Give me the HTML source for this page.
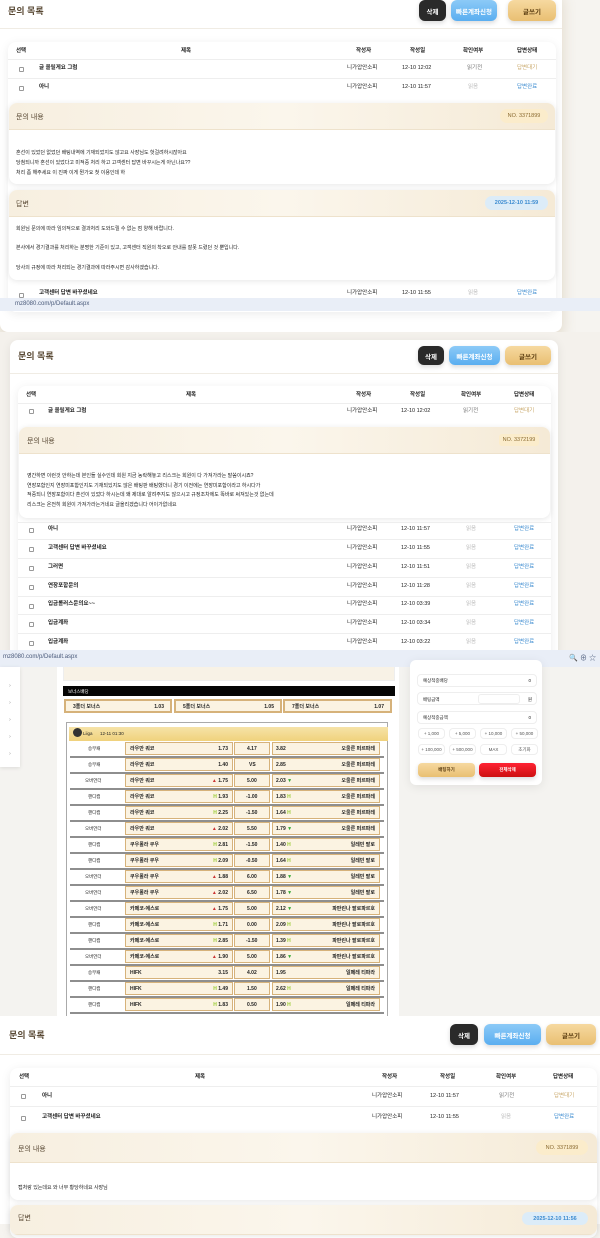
<!DOCTYPE html>
<html><head><meta charset="utf-8">
<style>
*{box-sizing:border-box;margin:0;padding:0}
body{width:600px;height:1224px;position:relative;overflow:hidden;background:#f6f4f0;font-family:"Liberation Sans","Noto Sans CJK KR",sans-serif;color:#222}
.a{position:absolute}
.card{position:absolute;background:#fff;border-radius:8px;box-shadow:0 2px 10px rgba(0,0,0,.08)}
.ttl{position:absolute;font-size:9px;color:#5a4a35;font-weight:bold;line-height:11px}
.btn{position:absolute;border-radius:6px;font-size:6.5px;font-weight:bold;display:flex;align-items:center;justify-content:center;box-shadow:0 2px 5px rgba(0,0,0,.15)}
.bk{background:#2a2a2a;color:#fff}.bl{background:linear-gradient(#8ccaf7,#5aaef0);color:#fff}.gd{background:linear-gradient(#f6d9a0,#e9bf72);color:#5a3c10}
.t{position:absolute;font-size:5.5px;white-space:nowrap;line-height:7px}
.b{font-weight:bold}
.cb{position:absolute;width:5px;height:5px;border:1px solid #999;border-radius:1px;background:#fff}
.pnl{position:absolute;background:#fff;border-radius:8px;box-shadow:0 1px 6px rgba(0,0,0,.1);overflow:hidden}
.ph{position:absolute;left:0;right:0;top:0;background:linear-gradient(90deg,#f7efe0,#fbf6ec,#f5ead6);border-bottom:1px solid #eee2cc}
.badge{position:absolute;border-radius:8px;font-size:5.5px;display:flex;align-items:center;justify-content:center}
.no{background:#fbeccb;color:#8a6a30}.dt{background:#dcecf8;color:#3a8ad0;font-weight:bold}
.line{position:absolute;height:1px;background:#eee}
.url{position:absolute;left:0;width:600px;background:#e9eef7;font-size:6px;color:#4a5a7a}
.bet{position:absolute;height:13px;background:#fbf3e2;border:1px solid #d6b27a;font-size:5px;font-weight:bold}
.bet span{position:absolute;top:3px;line-height:6px}
.sep{position:absolute;left:70px;width:314px;height:2px;background:#8e8e8e}
.ri{position:absolute;left:417px;width:120px;height:13px;border:1px solid #eee;border-radius:4px;font-size:4.5px;background:#fff}
.chip{position:absolute;width:27px;height:11px;border:1px solid #eee;border-radius:4px;font-size:4.5px;display:flex;align-items:center;justify-content:center;background:#fff;color:#555}
</style></head><body>

<!-- SECTION 1 -->
<div class="card" style="left:0;top:-10px;width:562px;height:342px;box-shadow:0 6px 14px rgba(160,130,80,.25)"></div>
<div class="ttl" style="left:8px;top:6px">문의 목록</div>
<div class="btn bk" style="left:419px;top:0;width:27px;height:21px">삭제</div>
<div class="btn bl" style="left:451px;top:0;width:46px;height:21px">빠른계좌신청</div>
<div class="btn gd" style="left:508px;top:0;width:48px;height:21px">글쓰기</div>
<div class="line" style="left:0;top:28px;width:562px;background:#f0ece4"></div>
<div class="card" style="left:8px;top:42px;width:548px;height:270px"></div>
<div class="t b" style="left:16px;top:48px">선택</div><div class="t b" style="left:181px;top:48px">제목</div>
<div class="t b" style="left:356px;top:48px">작성자</div><div class="t b" style="left:410px;top:48px">작성일</div>
<div class="t b" style="left:463px;top:48px">확인여부</div><div class="t b" style="left:517px;top:48px">답변상태</div>
<div class="line" style="left:8px;top:59px;width:548px"></div>
<div class="cb" style="left:19px;top:67px"></div><div class="t b" style="left:39px;top:65px">글 올릴게요 그럼</div>
<div class="t" style="left:347px;top:65px">니가압안소피</div><div class="t" style="left:402px;top:65px">12-10 12:02</div><div class="t" style="left:467px;top:65px;color:#777">읽기전</div><div class="t" style="left:517px;top:65px;color:#c9a86a">답변대기</div>
<div class="line" style="left:8px;top:78px;width:548px"></div>
<div class="cb" style="left:19px;top:86px"></div><div class="t b" style="left:39px;top:84px">아니</div>
<div class="t" style="left:347px;top:84px">니가압안소피</div><div class="t" style="left:402px;top:84px">12-10 11:57</div><div class="t" style="left:468px;top:84px;color:#bbb">읽음</div><div class="t" style="left:517px;top:84px;color:#3a8ad0">답변완료</div>
<div class="pnl" style="left:9px;top:103px;width:546px;height:81px"><div class="ph" style="height:27px"></div></div>
<div class="ttl" style="left:16px;top:112px;font-size:7px;font-weight:normal">문의 내용</div>
<div class="badge no" style="left:500px;top:109px;width:48px;height:14px">NO. 3371899</div>
<div class="t" style="left:16px;top:150px;font-size:5px">혼선이 있었던 없었던 배팅내역에 기재되었지도 않고요 사장님도 헛걸려하시잖아요</div>
<div class="t" style="left:16px;top:160px;font-size:5px">당첨되니까 혼선이 있었다고 미적중 처리 하고 고객센터 답변 바꾸시는게 아닌나요??</div>
<div class="t" style="left:16px;top:170px;font-size:5px">처리 좀 해주세요 이 진짜 이게 뭔가요 첫 이용인데 하</div>
<div class="pnl" style="left:9px;top:190px;width:546px;height:90px"><div class="ph" style="height:27px"></div></div>
<div class="ttl" style="left:16px;top:199px;font-size:7px;font-weight:normal">답변</div>
<div class="badge dt" style="left:485px;top:196px;width:63px;height:14px">2025-12-10 11:59</div>
<div class="t" style="left:16px;top:226px;font-size:5px">회원님 문의에 따라 임의적으로 결과처리 도와드릴 수 없는 점 양해 바랍니다.</div>
<div class="t" style="left:16px;top:245px;font-size:5px">본사에서 경기결과를 처리하는 분명한 기준이 있고, 고객센터 직원의 착오로 안내를 잘못 드렸던 것 뿐입니다.</div>
<div class="t" style="left:16px;top:265px;font-size:5px">당사의 규정에 따라 처리되는 경기결과에 따라주시면 감사하겠습니다.</div>
<div class="cb" style="left:19px;top:293px"></div><div class="t b" style="left:39px;top:290px">고객센터 답변 바꾸셨네요</div>
<div class="t" style="left:347px;top:290px">니가압안소피</div><div class="t" style="left:402px;top:290px">12-10 11:55</div><div class="t" style="left:468px;top:290px;color:#bbb">읽음</div><div class="t" style="left:517px;top:290px;color:#3a8ad0">답변완료</div>
<div class="url" style="top:298px;height:13px;padding:3px 0 0 15px">mz8080.com/p/Default.aspx</div>

<!-- SECTION 2 -->
<div class="a" style="left:0;top:332px;width:600px;height:320px;background:#f4f1ec"></div>
<div class="card" style="left:10px;top:340px;width:548px;height:320px"></div>
<div class="ttl" style="left:18px;top:351px">문의 목록</div>
<div class="btn bk" style="left:418px;top:346px;width:26px;height:19px">삭제</div>
<div class="btn bl" style="left:449px;top:346px;width:51px;height:19px">빠른계좌신청</div>
<div class="btn gd" style="left:505px;top:346px;width:46px;height:19px">글쓰기</div>
<div class="line" style="left:10px;top:373px;width:548px;background:#f0ece4"></div>
<div class="card" style="left:18px;top:386px;width:533px;height:275px"></div>
<div class="t b" style="left:26px;top:392px">선택</div><div class="t b" style="left:186px;top:392px">제목</div>
<div class="t b" style="left:356px;top:392px">작성자</div><div class="t b" style="left:410px;top:392px">작성일</div>
<div class="t b" style="left:461px;top:392px">확인여부</div><div class="t b" style="left:514px;top:392px">답변상태</div>
<div class="line" style="left:18px;top:403px;width:533px"></div>
<div class="cb" style="left:29px;top:409px"></div><div class="t b" style="left:48px;top:408px">글 올릴게요 그럼</div>
<div class="t" style="left:347px;top:408px">니가압안소피</div><div class="t" style="left:401px;top:408px">12-10 12:02</div><div class="t" style="left:463px;top:408px;color:#777">읽기전</div><div class="t" style="left:514px;top:408px;color:#c9a86a">답변대기</div>
<div class="pnl" style="left:19px;top:427px;width:531px;height:91px"><div class="ph" style="height:27px"></div></div>
<div class="ttl" style="left:27px;top:436px;font-size:7px;font-weight:normal">문의 내용</div>
<div class="badge no" style="left:499px;top:434px;width:40px;height:12px;border-radius:3px">NO. 3372199</div>
<div class="t" style="left:27px;top:473px;font-size:5px">영간하면 이런것 안하는데 본인들 실수인데 회원 지금 농락해놓고 리스크는 회원이 다 가져가라는 말씀이시죠?</div>
<div class="t" style="left:27px;top:483px;font-size:5px">연장포함인지 연장미포함인지도 기재되있지도 않은 배팅판 배팅했더니 경기 이전에는 연장미포함이라고 하시다가</div>
<div class="t" style="left:27px;top:492px;font-size:5px">적중되니 연장포함이다 혼선이 있었다 하시는데 왜 제대로 알려주지도 않으시고 규정조차에도 똑바로 써져있는것 없는데</div>
<div class="t" style="left:27px;top:502px;font-size:5px">리스크는 온전히 회원이 가져가라는거네요 글올리겠습니다 어이가없네요</div>
<div class="line" style="left:18px;top:522px;width:533px"></div>
<div class="cb" style="left:29px;top:528px"></div><div class="t b" style="left:48px;top:526px">아니</div><div class="t" style="left:347px;top:526px">니가압안소피</div><div class="t" style="left:401px;top:526px">12-10 11:57</div><div class="t" style="left:466px;top:526px;color:#bbb">읽음</div><div class="t" style="left:514px;top:526px;color:#3a8ad0">답변완료</div>
<div class="line" style="left:18px;top:539px;width:533px"></div>
<div class="cb" style="left:29px;top:547px"></div><div class="t b" style="left:48px;top:545px">고객센터 답변 바꾸셨네요</div><div class="t" style="left:347px;top:545px">니가압안소피</div><div class="t" style="left:401px;top:545px">12-10 11:55</div><div class="t" style="left:466px;top:545px;color:#bbb">읽음</div><div class="t" style="left:514px;top:545px;color:#3a8ad0">답변완료</div>
<div class="line" style="left:18px;top:558px;width:533px"></div>
<div class="cb" style="left:29px;top:566px"></div><div class="t b" style="left:48px;top:564px">그러면</div><div class="t" style="left:347px;top:564px">니가압안소피</div><div class="t" style="left:401px;top:564px">12-10 11:51</div><div class="t" style="left:466px;top:564px;color:#bbb">읽음</div><div class="t" style="left:514px;top:564px;color:#3a8ad0">답변완료</div>
<div class="line" style="left:18px;top:577px;width:533px"></div>
<div class="cb" style="left:29px;top:585px"></div><div class="t b" style="left:48px;top:583px">연장포함문의</div><div class="t" style="left:347px;top:583px">니가압안소피</div><div class="t" style="left:401px;top:583px">12-10 11:28</div><div class="t" style="left:466px;top:583px;color:#bbb">읽음</div><div class="t" style="left:514px;top:583px;color:#3a8ad0">답변완료</div>
<div class="line" style="left:18px;top:596px;width:533px"></div>
<div class="cb" style="left:29px;top:604px"></div><div class="t b" style="left:48px;top:601px">입금롤러스문의요~~</div><div class="t" style="left:347px;top:601px">니가압안소피</div><div class="t" style="left:401px;top:601px">12-10 03:39</div><div class="t" style="left:466px;top:601px;color:#bbb">읽음</div><div class="t" style="left:514px;top:601px;color:#3a8ad0">답변완료</div>
<div class="line" style="left:18px;top:614px;width:533px"></div>
<div class="cb" style="left:29px;top:622px"></div><div class="t b" style="left:48px;top:620px">입금계좌</div><div class="t" style="left:347px;top:620px">니가압안소피</div><div class="t" style="left:401px;top:620px">12-10 03:34</div><div class="t" style="left:466px;top:620px;color:#bbb">읽음</div><div class="t" style="left:514px;top:620px;color:#3a8ad0">답변완료</div>
<div class="line" style="left:18px;top:633px;width:533px"></div>
<div class="cb" style="left:29px;top:641px"></div><div class="t b" style="left:48px;top:639px">입금계좌</div><div class="t" style="left:347px;top:639px">니가압안소피</div><div class="t" style="left:401px;top:639px">12-10 03:22</div><div class="t" style="left:466px;top:639px;color:#bbb">읽음</div><div class="t" style="left:514px;top:639px;color:#3a8ad0">답변완료</div>

<!-- SECTION 3 -->
<div class="url" style="top:650px;height:17px;padding:4px 0 0 3px">mz8080.com/p/Default.aspx<span style="position:absolute;right:4px;top:3px;font-size:7px">🔍 ⊕ ☆</span></div>
<div class="a" style="left:0;top:667px;width:600px;height:350px;background:#f4f3f0"></div>
<div class="a" style="left:0;top:667px;width:20px;height:100px;background:#fff;box-shadow:0 1px 4px rgba(0,0,0,.1)"></div>
<div class="t" style="left:9px;top:683px;color:#999">›</div><div class="t" style="left:9px;top:700px;color:#999">›</div><div class="t" style="left:9px;top:717px;color:#999">›</div><div class="t" style="left:9px;top:734px;color:#999">›</div><div class="t" style="left:9px;top:751px;color:#999">›</div>
<div class="a" style="left:57px;top:667px;width:342px;height:350px;background:#fff"></div>
<div class="a" style="left:63px;top:667px;width:332px;height:14px;background:#f8f2e6;border:1px solid #eee;border-top:0"></div>
<div class="a" style="left:63px;top:686px;width:332px;height:10px;background:#050505"></div>
<div class="t" style="left:68px;top:688px;color:#fff;font-size:4.5px">보너스배당</div>
<div class="bet" style="left:64px;top:699px;width:108px;height:14px;border-width:2px"><span style="left:7px">3폴더 보너스</span><span style="right:6px">1.03</span></div>
<div class="bet" style="left:174px;top:699px;width:108px;height:14px;border-width:2px"><span style="left:7px">5폴더 보너스</span><span style="right:6px">1.05</span></div>
<div class="bet" style="left:283px;top:699px;width:109px;height:14px;border-width:2px"><span style="left:7px">7폴더 보너스</span><span style="right:6px">1.07</span></div>
<div class="a" style="left:66px;top:722px;width:322px;height:300px;border:1px solid #aaa;border-bottom:0"></div>
<div class="a" style="left:69px;top:727px;width:319px;height:14px;background:linear-gradient(#f6e3a8,#f0d27c)"></div>
<div class="a" style="left:73px;top:728px;width:9px;height:9px;border-radius:50%;background:#333"></div>
<div class="t" style="left:83px;top:730px;font-size:4.5px">Liiga &nbsp;&nbsp;&nbsp;&nbsp; 12-11 01:30</div>

<div class="t" style="left:88px;top:745px;font-size:4.5px">승무패</div><div class="bet" style="left:125px;top:742px;width:108px"><span style="left:4px">라우만 쿼코</span><span style="right:4px">1.73</span></div><div class="bet" style="left:234px;top:742px;width:36px"><span style="left:12px">4.17</span></div><div class="bet" style="left:272px;top:742px;width:108px"><span style="left:3px">3.82</span><span style="right:4px">오울룬 퍼르파레</span></div><div class="sep" style="top:756px"></div>
<div class="t" style="left:88px;top:761px;font-size:4.5px">승무패</div><div class="bet" style="left:125px;top:758px;width:108px"><span style="left:4px">라우만 쿼코</span><span style="right:4px">1.40</span></div><div class="bet" style="left:234px;top:758px;width:36px"><span style="left:14px">VS</span></div><div class="bet" style="left:272px;top:758px;width:108px"><span style="left:3px">2.85</span><span style="right:4px">오울룬 퍼르파레</span></div><div class="sep" style="top:772px"></div>
<div class="t" style="left:85px;top:777px;font-size:4.5px">오버언더</div><div class="bet" style="left:125px;top:774px;width:108px"><span style="left:4px">라우만 쿼코</span><span style="right:4px"><b style="color:#c33">▲</b> 1.75</span></div><div class="bet" style="left:234px;top:774px;width:36px"><span style="left:12px">5.00</span></div><div class="bet" style="left:272px;top:774px;width:108px"><span style="left:3px">2.03 <b style="color:#3a3">▼</b></span><span style="right:4px">오울룬 퍼르파레</span></div><div class="sep" style="top:788px"></div>
<div class="t" style="left:88px;top:793px;font-size:4.5px">핸디캡</div><div class="bet" style="left:125px;top:790px;width:108px"><span style="left:4px">라우만 쿼코</span><span style="right:4px"><b style="color:#9c3">H</b> 1.93</span></div><div class="bet" style="left:234px;top:790px;width:36px"><span style="left:11px">-1.00</span></div><div class="bet" style="left:272px;top:790px;width:108px"><span style="left:3px">1.83 <b style="color:#9c3">H</b></span><span style="right:4px">오울룬 퍼르파레</span></div><div class="sep" style="top:804px"></div>
<div class="t" style="left:88px;top:809px;font-size:4.5px">핸디캡</div><div class="bet" style="left:125px;top:806px;width:108px"><span style="left:4px">라우만 쿼코</span><span style="right:4px"><b style="color:#9c3">H</b> 2.25</span></div><div class="bet" style="left:234px;top:806px;width:36px"><span style="left:11px">-1.50</span></div><div class="bet" style="left:272px;top:806px;width:108px"><span style="left:3px">1.64 <b style="color:#9c3">H</b></span><span style="right:4px">오울룬 퍼르파레</span></div><div class="sep" style="top:820px"></div>
<div class="t" style="left:85px;top:825px;font-size:4.5px">오버언더</div><div class="bet" style="left:125px;top:822px;width:108px"><span style="left:4px">라우만 쿼코</span><span style="right:4px"><b style="color:#c33">▲</b> 2.02</span></div><div class="bet" style="left:234px;top:822px;width:36px"><span style="left:12px">5.50</span></div><div class="bet" style="left:272px;top:822px;width:108px"><span style="left:3px">1.79 <b style="color:#3a3">▼</b></span><span style="right:4px">오울룬 퍼르파레</span></div><div class="sep" style="top:836px"></div>
<div class="t" style="left:88px;top:841px;font-size:4.5px">핸디캡</div><div class="bet" style="left:125px;top:838px;width:108px"><span style="left:4px">쿠우롤라 쿠우</span><span style="right:4px"><b style="color:#9c3">H</b> 2.81</span></div><div class="bet" style="left:234px;top:838px;width:36px"><span style="left:11px">-1.50</span></div><div class="bet" style="left:272px;top:838px;width:108px"><span style="left:3px">1.40 <b style="color:#9c3">H</b></span><span style="right:4px">일레빈 팔로</span></div><div class="sep" style="top:852px"></div>
<div class="t" style="left:88px;top:857px;font-size:4.5px">핸디캡</div><div class="bet" style="left:125px;top:854px;width:108px"><span style="left:4px">쿠우롤라 쿠우</span><span style="right:4px"><b style="color:#9c3">H</b> 2.09</span></div><div class="bet" style="left:234px;top:854px;width:36px"><span style="left:11px">-0.50</span></div><div class="bet" style="left:272px;top:854px;width:108px"><span style="left:3px">1.64 <b style="color:#9c3">H</b></span><span style="right:4px">일레빈 팔로</span></div><div class="sep" style="top:868px"></div>
<div class="t" style="left:85px;top:873px;font-size:4.5px">오버언더</div><div class="bet" style="left:125px;top:870px;width:108px"><span style="left:4px">쿠우롤라 쿠우</span><span style="right:4px"><b style="color:#c33">▲</b> 1.88</span></div><div class="bet" style="left:234px;top:870px;width:36px"><span style="left:12px">6.00</span></div><div class="bet" style="left:272px;top:870px;width:108px"><span style="left:3px">1.88 <b style="color:#3a3">▼</b></span><span style="right:4px">일레빈 팔로</span></div><div class="sep" style="top:884px"></div>
<div class="t" style="left:85px;top:889px;font-size:4.5px">오버언더</div><div class="bet" style="left:125px;top:886px;width:108px"><span style="left:4px">쿠우롤라 쿠우</span><span style="right:4px"><b style="color:#c33">▲</b> 2.02</span></div><div class="bet" style="left:234px;top:886px;width:36px"><span style="left:12px">6.50</span></div><div class="bet" style="left:272px;top:886px;width:108px"><span style="left:3px">1.78 <b style="color:#3a3">▼</b></span><span style="right:4px">일레빈 팔로</span></div><div class="sep" style="top:900px"></div>
<div class="t" style="left:85px;top:905px;font-size:4.5px">오버언더</div><div class="bet" style="left:125px;top:902px;width:108px"><span style="left:4px">카페코-에스로</span><span style="right:4px"><b style="color:#c33">▲</b> 1.75</span></div><div class="bet" style="left:234px;top:902px;width:36px"><span style="left:12px">5.00</span></div><div class="bet" style="left:272px;top:902px;width:108px"><span style="left:3px">2.12 <b style="color:#3a3">▼</b></span><span style="right:4px">파판린나 팔로파르호</span></div><div class="sep" style="top:916px"></div>
<div class="t" style="left:88px;top:921px;font-size:4.5px">핸디캡</div><div class="bet" style="left:125px;top:918px;width:108px"><span style="left:4px">카페코-에스로</span><span style="right:4px"><b style="color:#9c3">H</b> 1.71</span></div><div class="bet" style="left:234px;top:918px;width:36px"><span style="left:12px">0.00</span></div><div class="bet" style="left:272px;top:918px;width:108px"><span style="left:3px">2.09 <b style="color:#9c3">H</b></span><span style="right:4px">파판린나 팔로파르호</span></div><div class="sep" style="top:932px"></div>
<div class="t" style="left:88px;top:937px;font-size:4.5px">핸디캡</div><div class="bet" style="left:125px;top:934px;width:108px"><span style="left:4px">카페코-에스로</span><span style="right:4px"><b style="color:#9c3">H</b> 2.85</span></div><div class="bet" style="left:234px;top:934px;width:36px"><span style="left:11px">-1.50</span></div><div class="bet" style="left:272px;top:934px;width:108px"><span style="left:3px">1.39 <b style="color:#9c3">H</b></span><span style="right:4px">파판린나 팔로파르호</span></div><div class="sep" style="top:948px"></div>
<div class="t" style="left:85px;top:953px;font-size:4.5px">오버언더</div><div class="bet" style="left:125px;top:950px;width:108px"><span style="left:4px">카페코-에스로</span><span style="right:4px"><b style="color:#c33">▲</b> 1.90</span></div><div class="bet" style="left:234px;top:950px;width:36px"><span style="left:12px">5.00</span></div><div class="bet" style="left:272px;top:950px;width:108px"><span style="left:3px">1.86 <b style="color:#3a3">▼</b></span><span style="right:4px">파판린나 팔로파르호</span></div><div class="sep" style="top:964px"></div>
<div class="t" style="left:88px;top:969px;font-size:4.5px">승무패</div><div class="bet" style="left:125px;top:966px;width:108px"><span style="left:4px">HIFK</span><span style="right:4px">3.15</span></div><div class="bet" style="left:234px;top:966px;width:36px"><span style="left:12px">4.02</span></div><div class="bet" style="left:272px;top:966px;width:108px"><span style="left:3px">1.95</span><span style="right:4px">일페레 티파라</span></div><div class="sep" style="top:980px"></div>
<div class="t" style="left:88px;top:985px;font-size:4.5px">핸디캡</div><div class="bet" style="left:125px;top:982px;width:108px"><span style="left:4px">HIFK</span><span style="right:4px"><b style="color:#9c3">H</b> 1.49</span></div><div class="bet" style="left:234px;top:982px;width:36px"><span style="left:12px">1.50</span></div><div class="bet" style="left:272px;top:982px;width:108px"><span style="left:3px">2.62 <b style="color:#9c3">H</b></span><span style="right:4px">일페레 티파라</span></div><div class="sep" style="top:996px"></div>
<div class="t" style="left:88px;top:1001px;font-size:4.5px">핸디캡</div><div class="bet" style="left:125px;top:998px;width:108px"><span style="left:4px">HIFK</span><span style="right:4px"><b style="color:#9c3">H</b> 1.83</span></div><div class="bet" style="left:234px;top:998px;width:36px"><span style="left:12px">0.50</span></div><div class="bet" style="left:272px;top:998px;width:108px"><span style="left:3px">1.90 <b style="color:#9c3">H</b></span><span style="right:4px">일페레 티파라</span></div><div class="sep" style="top:1012px"></div>

<!-- right panel -->
<div class="card" style="left:410px;top:660px;width:132px;height:125px;border-radius:6px"></div>
<div class="ri" style="top:674px"><span style="position:absolute;left:5px;top:3px">예상적중배당</span><span style="position:absolute;right:5px;top:3px">0</span></div>
<div class="ri" style="top:692px"><span style="position:absolute;left:5px;top:4px">배팅금액</span><span style="position:absolute;left:60px;top:1px;width:42px;height:10px;border:1px solid #eee;border-radius:3px"></span><span style="position:absolute;right:4px;top:4px">원</span></div>
<div class="ri" style="top:711px"><span style="position:absolute;left:5px;top:3px">예상적중금액</span><span style="position:absolute;right:5px;top:3px">0</span></div>
<div class="chip" style="left:418px;top:728px">+ 1,000</div><div class="chip" style="left:449px;top:728px">+ 5,000</div><div class="chip" style="left:480px;top:728px">+ 10,000</div><div class="chip" style="left:511px;top:728px">+ 50,000</div>
<div class="chip" style="left:418px;top:744px">+ 100,000</div><div class="chip" style="left:449px;top:744px">+ 500,000</div><div class="chip" style="left:480px;top:744px">MAX</div><div class="chip" style="left:511px;top:744px">초기화</div>
<div class="btn gd" style="left:418px;top:763px;width:57px;height:14px;border-radius:4px;font-size:4.5px">배팅하기</div>
<div class="btn" style="left:479px;top:763px;width:57px;height:14px;border-radius:4px;font-size:4.5px;background:linear-gradient(#f23,#c11);color:#fff">전체삭제</div>

<!-- SECTION 4 -->
<div class="a" style="left:0;top:1016px;width:600px;height:208px;background:#fff"></div>
<div class="ttl" style="left:9px;top:1030px">문의 목록</div>
<div class="btn bk" style="left:450px;top:1024px;width:28px;height:21px">삭제</div>
<div class="btn bl" style="left:484px;top:1024px;width:57px;height:21px">빠른계좌신청</div>
<div class="btn gd" style="left:546px;top:1024px;width:50px;height:21px">글쓰기</div>
<div class="line" style="left:0;top:1054px;width:600px;background:#f0ece4"></div>
<div class="card" style="left:10px;top:1068px;width:587px;height:170px"></div>
<div class="t b" style="left:19px;top:1074px">선택</div><div class="t b" style="left:195px;top:1074px">제목</div>
<div class="t b" style="left:382px;top:1074px">작성자</div><div class="t b" style="left:440px;top:1074px">작성일</div>
<div class="t b" style="left:496px;top:1074px">확인여부</div><div class="t b" style="left:553px;top:1074px">답변상태</div>
<div class="line" style="left:10px;top:1086px;width:587px"></div>
<div class="cb" style="left:21px;top:1094px"></div><div class="t b" style="left:42px;top:1093px">아니</div>
<div class="t" style="left:372px;top:1093px">니가압안소피</div><div class="t" style="left:430px;top:1093px">12-10 11:57</div><div class="t" style="left:499px;top:1093px;color:#777">읽기전</div><div class="t" style="left:554px;top:1093px;color:#c9a86a">답변대기</div>
<div class="line" style="left:10px;top:1106px;width:587px"></div>
<div class="cb" style="left:21px;top:1116px"></div><div class="t b" style="left:42px;top:1114px">고객센터 답변 바꾸셨네요</div>
<div class="t" style="left:372px;top:1114px">니가압안소피</div><div class="t" style="left:430px;top:1114px">12-10 11:55</div><div class="t" style="left:501px;top:1114px;color:#bbb">읽음</div><div class="t" style="left:554px;top:1114px;color:#3a8ad0">답변완료</div>
<div class="pnl" style="left:10px;top:1133px;width:587px;height:67px"><div class="ph" style="height:30px"></div></div>
<div class="ttl" style="left:18px;top:1144px;font-size:7px;font-weight:normal">문의 내용</div>
<div class="badge no" style="left:536px;top:1140px;width:52px;height:15px">NO. 3371899</div>
<div class="t" style="left:18px;top:1185px;font-size:5px">캡처랑 있는데요 와 너무 황당하네요 사장님</div>
<div class="pnl" style="left:10px;top:1205px;width:587px;height:30px"><div class="ph" style="height:30px"></div></div>
<div class="ttl" style="left:18px;top:1213px;font-size:7px;font-weight:normal">답변</div>
<div class="badge dt" style="left:522px;top:1212px;width:66px;height:13px">2025-12-10 11:56</div>
</body></html>
